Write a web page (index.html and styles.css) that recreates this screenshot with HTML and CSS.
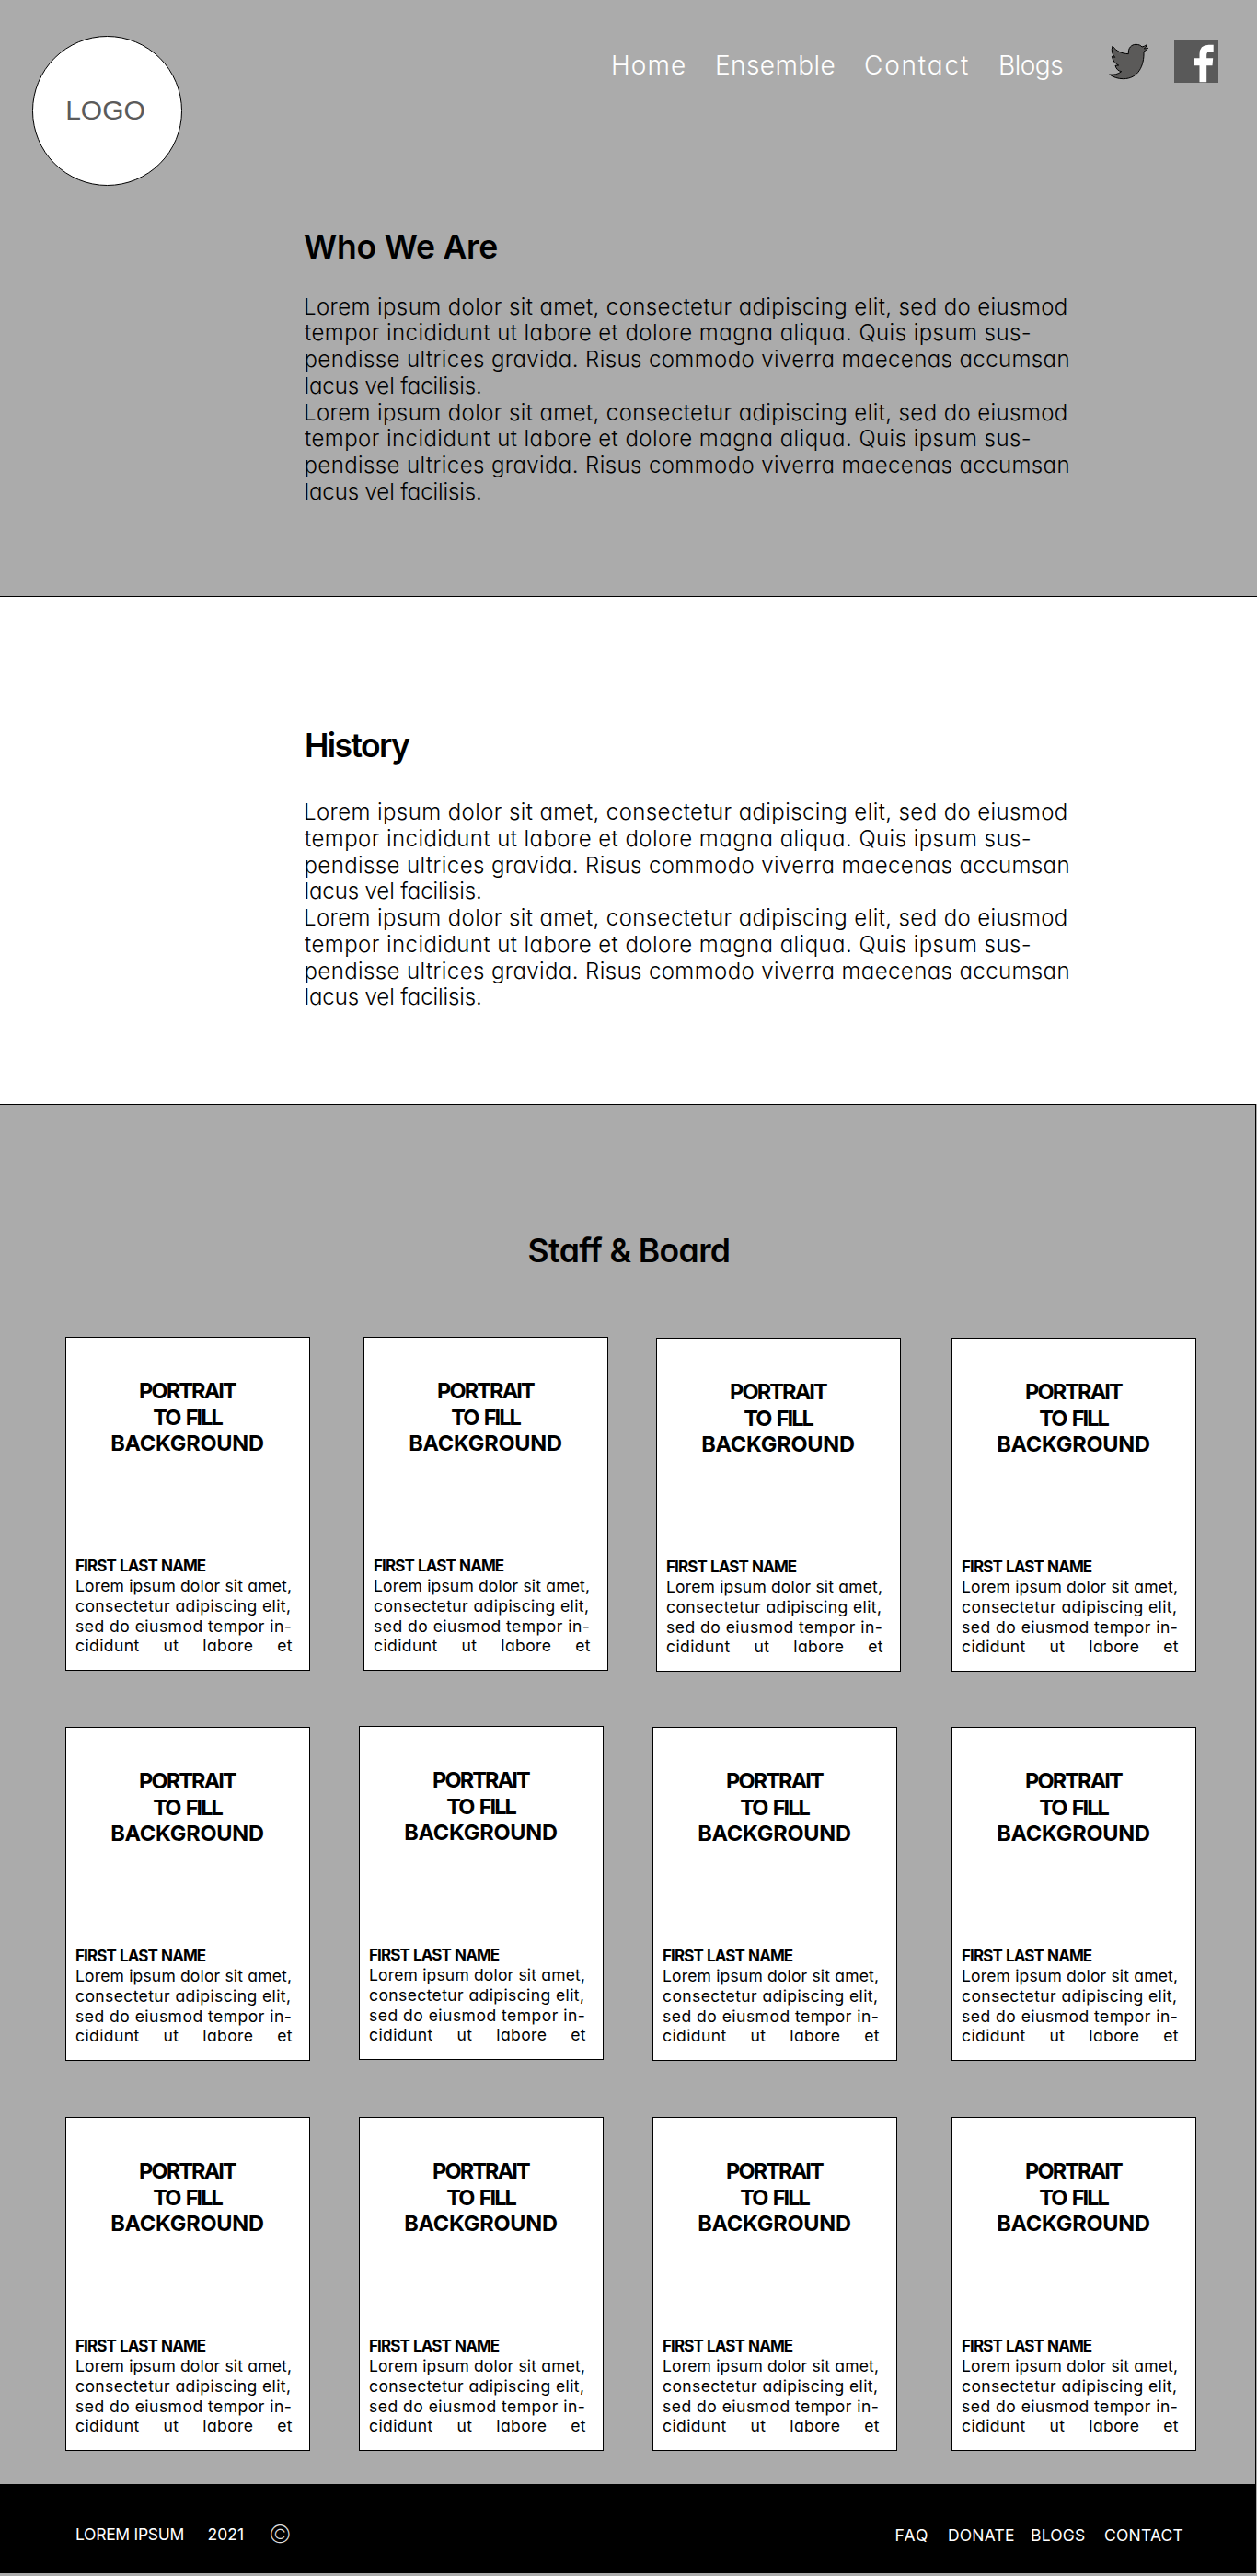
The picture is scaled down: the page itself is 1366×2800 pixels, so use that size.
FILE: index.html
```html
<!DOCTYPE html>
<html lang="en">
<head>
<meta charset="utf-8">
<title>Who We Are</title>
<link rel="stylesheet" href="styles.css">
</head>
<body>
<section class="hero">
  <header class="header">
    <div class="logo">LOGO</div>
    <nav class="nav">
      <a class="home">Home</a>
      <a class="ensemble">Ensemble</a>
      <a class="contact">Contact</a>
      <a class="blogs">Blogs</a>
      <svg class="twitter" width="46" height="44" viewBox="42 42 138 132"><path d="M57 60C70 78 88 85 109 86C107 66 119 55 133 55C143 55 149 58 153 63Q162 61 169 56Q167 64 160 69Q168 68 173 67Q168 74 159 78C161 125 140 167 92 167C75 167 60 162 47 153Q70 156 86 143Q71 141 66 124L77 123Q60 116 55 94L65 97Q50 82 57 60Z" fill="#5b5a59" stroke="#000" stroke-width="3"/></svg>
      <svg class="facebook" width="48" height="47" viewBox="0 0 48 47"><rect width="48" height="47" fill="#595959"/><path d="M27.5 46.3V28.3H21V20.3H27.5V16Q27.5 5.7 37.5 5.7H42.7V13H39Q35.2 13 35.2 17V20.3H42.2L41.5 28.3H35.2V46.3Z" fill="#fff"/></svg>
    </nav>
  </header>
  <div class="article">
    <h1 class="title who">Who We Are</h1>
    <p class="copy">
      <span class="l1">Lorem ipsum dolor sit amet, consectetur adipiscing elit, sed do eiusmod</span>
      <span class="l2">tempor incididunt ut labore et dolore magna aliqua. Quis ipsum sus-</span>
      <span class="l3">pendisse ultrices gravida. Risus commodo viverra maecenas accumsan</span>
      <span class="l4">lacus vel facilisis.</span>
      <span class="l1">Lorem ipsum dolor sit amet, consectetur adipiscing elit, sed do eiusmod</span>
      <span class="l2">tempor incididunt ut labore et dolore magna aliqua. Quis ipsum sus-</span>
      <span class="l3">pendisse ultrices gravida. Risus commodo viverra maecenas accumsan</span>
      <span class="l4">lacus vel facilisis.</span>
    </p>
  </div>
</section>
<section class="history">
  <div class="article">
    <h2 class="title hist">History</h2>
    <p class="copy">
      <span class="l1">Lorem ipsum dolor sit amet, consectetur adipiscing elit, sed do eiusmod</span>
      <span class="l2">tempor incididunt ut labore et dolore magna aliqua. Quis ipsum sus-</span>
      <span class="l3">pendisse ultrices gravida. Risus commodo viverra maecenas accumsan</span>
      <span class="l4">lacus vel facilisis.</span>
      <span class="l1">Lorem ipsum dolor sit amet, consectetur adipiscing elit, sed do eiusmod</span>
      <span class="l2">tempor incididunt ut labore et dolore magna aliqua. Quis ipsum sus-</span>
      <span class="l3">pendisse ultrices gravida. Risus commodo viverra maecenas accumsan</span>
      <span class="l4">lacus vel facilisis.</span>
    </p>
  </div>
</section>
<section class="staff">
  <h2 class="title board">Staff &amp; Board</h2>
  <div class="row first">
    <article class="card"><div class="portrait"><span class="p1">PORTRAIT</span><span class="p2">TO FILL</span><span class="p3">BACKGROUND</span></div><h3 class="name">FIRST LAST NAME</h3><p class="bio"><span class="b1">Lorem ipsum dolor sit amet,</span><span class="b2">consectetur adipiscing elit,</span><span class="b3">sed do eiusmod tempor in-</span><span class="b4">cididunt ut labore et</span></p></article>
    <article class="card"><div class="portrait"><span class="p1">PORTRAIT</span><span class="p2">TO FILL</span><span class="p3">BACKGROUND</span></div><h3 class="name">FIRST LAST NAME</h3><p class="bio"><span class="b1">Lorem ipsum dolor sit amet,</span><span class="b2">consectetur adipiscing elit,</span><span class="b3">sed do eiusmod tempor in-</span><span class="b4">cididunt ut labore et</span></p></article>
    <article class="card lower"><div class="portrait"><span class="p1">PORTRAIT</span><span class="p2">TO FILL</span><span class="p3">BACKGROUND</span></div><h3 class="name">FIRST LAST NAME</h3><p class="bio"><span class="b1">Lorem ipsum dolor sit amet,</span><span class="b2">consectetur adipiscing elit,</span><span class="b3">sed do eiusmod tempor in-</span><span class="b4">cididunt ut labore et</span></p></article>
    <article class="card lower"><div class="portrait"><span class="p1">PORTRAIT</span><span class="p2">TO FILL</span><span class="p3">BACKGROUND</span></div><h3 class="name">FIRST LAST NAME</h3><p class="bio"><span class="b1">Lorem ipsum dolor sit amet,</span><span class="b2">consectetur adipiscing elit,</span><span class="b3">sed do eiusmod tempor in-</span><span class="b4">cididunt ut labore et</span></p></article>
  </div>
  <div class="row">
    <article class="card"><div class="portrait"><span class="p1">PORTRAIT</span><span class="p2">TO FILL</span><span class="p3">BACKGROUND</span></div><h3 class="name">FIRST LAST NAME</h3><p class="bio"><span class="b1">Lorem ipsum dolor sit amet,</span><span class="b2">consectetur adipiscing elit,</span><span class="b3">sed do eiusmod tempor in-</span><span class="b4">cididunt ut labore et</span></p></article>
    <article class="card higher"><div class="portrait"><span class="p1">PORTRAIT</span><span class="p2">TO FILL</span><span class="p3">BACKGROUND</span></div><h3 class="name">FIRST LAST NAME</h3><p class="bio"><span class="b1">Lorem ipsum dolor sit amet,</span><span class="b2">consectetur adipiscing elit,</span><span class="b3">sed do eiusmod tempor in-</span><span class="b4">cididunt ut labore et</span></p></article>
    <article class="card"><div class="portrait"><span class="p1">PORTRAIT</span><span class="p2">TO FILL</span><span class="p3">BACKGROUND</span></div><h3 class="name">FIRST LAST NAME</h3><p class="bio"><span class="b1">Lorem ipsum dolor sit amet,</span><span class="b2">consectetur adipiscing elit,</span><span class="b3">sed do eiusmod tempor in-</span><span class="b4">cididunt ut labore et</span></p></article>
    <article class="card"><div class="portrait"><span class="p1">PORTRAIT</span><span class="p2">TO FILL</span><span class="p3">BACKGROUND</span></div><h3 class="name">FIRST LAST NAME</h3><p class="bio"><span class="b1">Lorem ipsum dolor sit amet,</span><span class="b2">consectetur adipiscing elit,</span><span class="b3">sed do eiusmod tempor in-</span><span class="b4">cididunt ut labore et</span></p></article>
  </div>
  <div class="row">
    <article class="card"><div class="portrait"><span class="p1">PORTRAIT</span><span class="p2">TO FILL</span><span class="p3">BACKGROUND</span></div><h3 class="name">FIRST LAST NAME</h3><p class="bio"><span class="b1">Lorem ipsum dolor sit amet,</span><span class="b2">consectetur adipiscing elit,</span><span class="b3">sed do eiusmod tempor in-</span><span class="b4">cididunt ut labore et</span></p></article>
    <article class="card"><div class="portrait"><span class="p1">PORTRAIT</span><span class="p2">TO FILL</span><span class="p3">BACKGROUND</span></div><h3 class="name">FIRST LAST NAME</h3><p class="bio"><span class="b1">Lorem ipsum dolor sit amet,</span><span class="b2">consectetur adipiscing elit,</span><span class="b3">sed do eiusmod tempor in-</span><span class="b4">cididunt ut labore et</span></p></article>
    <article class="card"><div class="portrait"><span class="p1">PORTRAIT</span><span class="p2">TO FILL</span><span class="p3">BACKGROUND</span></div><h3 class="name">FIRST LAST NAME</h3><p class="bio"><span class="b1">Lorem ipsum dolor sit amet,</span><span class="b2">consectetur adipiscing elit,</span><span class="b3">sed do eiusmod tempor in-</span><span class="b4">cididunt ut labore et</span></p></article>
    <article class="card"><div class="portrait"><span class="p1">PORTRAIT</span><span class="p2">TO FILL</span><span class="p3">BACKGROUND</span></div><h3 class="name">FIRST LAST NAME</h3><p class="bio"><span class="b1">Lorem ipsum dolor sit amet,</span><span class="b2">consectetur adipiscing elit,</span><span class="b3">sed do eiusmod tempor in-</span><span class="b4">cididunt ut labore et</span></p></article>
  </div>
</section>
<footer class="footer">
  <div class="legal"><span class="brand">LOREM IPSUM</span><span>2021</span><span class="copyright">©</span></div>
  <nav class="links"><a class="faq">FAQ</a><a>DONATE</a><a>BLOGS</a><a>CONTACT</a></nav>
</footer>
</body>
</html>
```
FILE: styles.css
```css
* { box-sizing: border-box; }
body { margin: 0; height: 2800px; background: #ababab; color: #000; font-family: Inter, "Liberation Sans", sans-serif; font-feature-settings: "cv11"; }
.hero { height: 649px; border-bottom: 1px solid #000; }
.header { display: flex; justify-content: space-between; padding: 39px 42px 0 35px; }
.logo { width: 163px; height: 163px; border: 1px solid #000; border-radius: 50%; background: #fff; color: #5b5b5b; font: 30px/159px "Liberation Sans", sans-serif; text-align: center; padding-right: 4px; }
.nav { display: grid; grid-template-columns: 113px 162px 146px 119px 72px 48px; align-items: start; width: 660px; font-size: 28px; font-weight: 300; line-height: 34px; color: #fff; }
.nav a { margin-top: 15px; }
.home { letter-spacing: 1.1px; }
.ensemble { letter-spacing: .4px; }
.contact { letter-spacing: 1.8px; }
.blogs { letter-spacing: -.5px; }
.twitter { margin-top: 5px; }
.facebook { margin-top: 4px; }
.article { padding: 45px 0 0 330px; }
.title { margin: 0; font-size: 35.5px; font-weight: 600; line-height: 44px; white-space: nowrap; }
.who { letter-spacing: -.2px; margin-bottom: 28.5px; }
.history { height: 551px; background: #fff; }
.history .article { padding-top: 140px; }
.hist { letter-spacing: -1.6px; margin: 0 0 36px 1px; }
.copy { margin: 0; font-size: 24px; font-weight: 300; line-height: 28.75px; }
.copy span { display: block; white-space: nowrap; }
.l1 { letter-spacing: .4px; }
.l2 { letter-spacing: .44px; padding-left: 1px; }
.l3 { letter-spacing: .4px; padding-left: .5px; }
.l4 { letter-spacing: -.11px; padding-left: .5px; }
.staff { width: 1365px; height: 1500px; border: solid #000; border-width: 1px 1px 0 0; padding: 137px 0 0 71px; }
.board { letter-spacing: -.6px; margin: 0 68px 71px 0; text-align: center; }
.row { display: grid; grid-template-columns: 319px 319px 325px 266px; height: 424px; align-items: start; }
.first { grid-template-columns: 324px 318px 321px 266px; }
.card { width: 266px; height: 363px; border: 1px solid #000; background: #fff; padding: 44px 0 0 10px; white-space: nowrap; }
.lower { margin-top: 1px; }
.higher { margin-top: -1px; }
.portrait { margin: 0 11px 0 0; font-size: 23.5px; font-weight: 650; line-height: 28.5px; text-align: center; height: 193px; }
.portrait span, .bio span { display: block; }
.p1 { letter-spacing: -1.85px; }
.p2 { letter-spacing: -2px; word-spacing: 3px; }
.p3 { letter-spacing: -.2px; }
.name { margin: 0; font-size: 17px; font-weight: 650; line-height: 22px; letter-spacing: -.9px; word-spacing: 1px; }
.bio { margin: 0; width: 236px; font-size: 17.5px; line-height: 21.75px; }
.b1 { letter-spacing: .17px; }
.b2 { letter-spacing: .4px; }
.b3 { letter-spacing: .49px; }
.b4 { letter-spacing: .4px; text-align-last: justify; }
.footer { display: flex; justify-content: space-between; width: 1365px; height: 97px; padding: 44px 79px 0 82px; background: #000; color: #fff; font-size: 17.5px; line-height: 22px; }
.legal { display: grid; grid-template-columns: 143.5px 66.5px 30px; }
.brand { letter-spacing: -.3px; }
.copyright { font-size: 27px; font-weight: 200; color: #ddd; }
.links { display: grid; grid-template-columns: 57.5px 90px 80px 86px; letter-spacing: .18px; padding-top: 1px; }
.faq { letter-spacing: 1.2px; }
```
